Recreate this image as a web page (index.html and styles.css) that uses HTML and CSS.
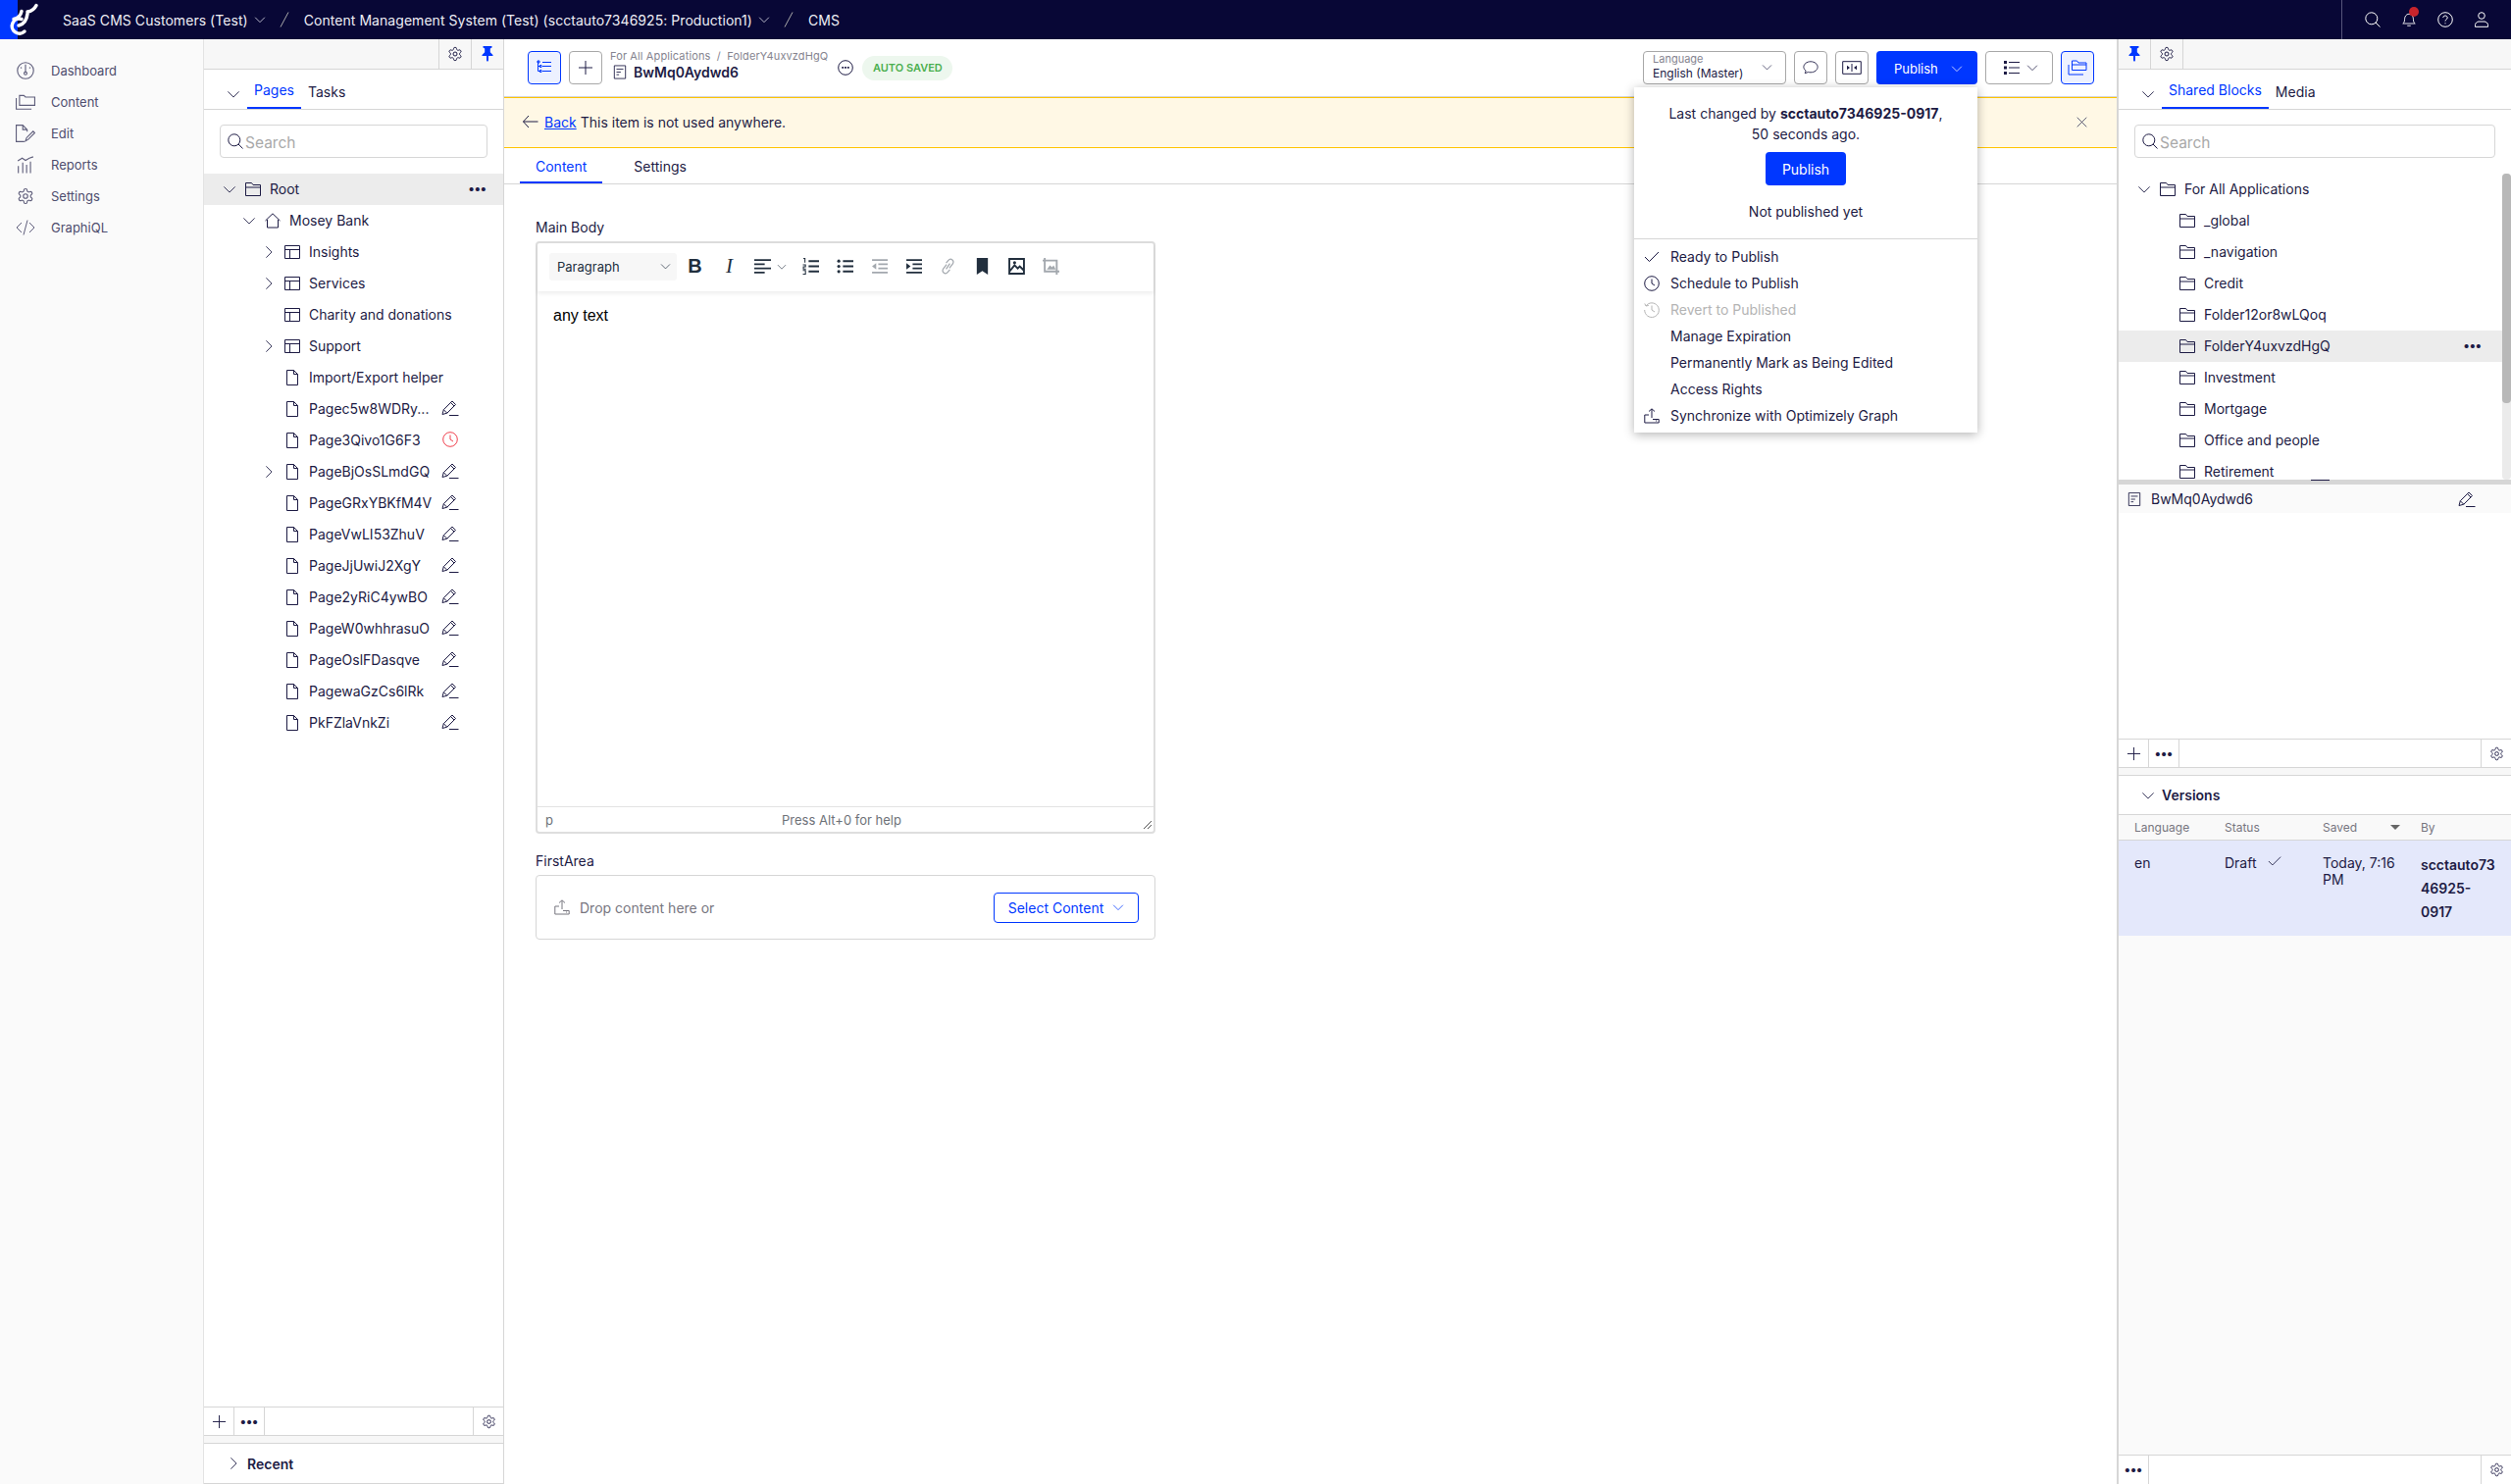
FILE: index.html
```html
<!DOCTYPE html>
<html lang="en">
<head>
  <meta charset="UTF-8" />
  <title>CMS</title>
  <link rel="stylesheet" href="styles.css">
</head>
<body>
  <svg class="sprite" width="0" height="0">
    <symbol id="i-chev-d" viewBox="0 0 16 16"><path d="M1.5 5l6.5 6.5L14.500 5"/></symbol>
    <symbol id="i-chev-r" viewBox="0 0 16 16"><path d="M5 1.500L11.500 8 5 14.500"/></symbol>
    <symbol id="i-gear" viewBox="0 0 24 24"><path class="w15" d="M12.220 2h-.44a2 2 0 0 0-2 2v.18a2 2 0 0 1-1 1.730l-.43.25a2 2 0 0 1-2 0l-.15-.08a2 2 0 0 0-2.730.73l-.22.38a2 2 0 0 0 .73 2.730l.15.1a2 2 0 0 1 1 1.720v.51a2 2 0 0 1-1 1.740l-.15.09a2 2 0 0 0-.73 2.730l.22.38a2 2 0 0 0 2.730.73l.15-.08a2 2 0 0 1 2 0l.43.25a2 2 0 0 1 1 1.730V20a2 2 0 0 0 2 2h.44a2 2 0 0 0 2-2v-.18a2 2 0 0 1 1-1.730l.43-.25a2 2 0 0 1 2 0l.15.08a2 2 0 0 0 2.730-.73l.22-.39a2 2 0 0 0-.73-2.730l-.15-.08a2 2 0 0 1-1-1.740v-.5a2 2 0 0 1 1-1.740l.15-.09a2 2 0 0 0 .73-2.730l-.22-.38a2 2 0 0 0-2.730-.73l-.15.08a2 2 0 0 1-2 0l-.43-.25a2 2 0 0 1-1-1.730V4a2 2 0 0 0-2-2z"/><circle class="w15" cx="12" cy="12" r="3"/></symbol>
    <symbol id="i-pin" viewBox="0 0 16 16"><path class="fill" d="M3.500 0h9v1.500l-1.700 1v3.700l2.700 2.700V10H9v4.500L8 16l-1-1.500V10H2.500V8.900l2.700-2.700V2.500l-1.700-1z"/></symbol>
    <symbol id="i-folder" viewBox="0 0 16 16"><path d="M.5 14.500V1.500h6l1.500 2h7.500v11zM.5 6h15"/></symbol>
    <symbol id="i-folder-open" viewBox="0 0 20 16"><path d="M4.500 10.500V1h5l1.500 2h8v7.500zM4.500 5h14.500M1 5v10h15"/></symbol>
    <symbol id="i-home" viewBox="0 0 16 16"><path d="M.5 8L8 .8 15.500 8M2.500 7v8h11V7"/></symbol>
    <symbol id="i-layout" viewBox="0 0 16 16"><path d="M.5 1.500h15v13H.5zM.5 5.500h15M5.500 5.500v9"/></symbol>
    <symbol id="i-page" viewBox="0 0 16 16"><path d="M2.500.5h7l4 4v11h-11zM9.500.5v4h4"/></symbol>
    <symbol id="i-pencil" viewBox="0 0 18 16"><path d="M1 14.500l1.300-4.800L11 1l3.500 3.500-8.700 8.700zM9.500 2.500L13 6M2.300 9.700l3.500 3.500M8 15.500h9.500"/></symbol>
    <symbol id="i-clock" viewBox="0 0 16 16"><circle cx="8" cy="8" r="7.300"/><path d="M8 3.500V8l3 2"/></symbol>
    <symbol id="i-history" viewBox="0 0 16 16"><path d="M2 4a7.300 7.300 0 1 1-1.300 4M.8 1.500L2 4l2.800-.6M8 3.500V8l3 2"/></symbol>
    <symbol id="i-plus" viewBox="0 0 16 16"><path d="M8 1v14M1 8h14"/></symbol>
    <symbol id="i-search" viewBox="0 0 16 16"><circle cx="6.800" cy="6.800" r="6"/><path d="M11 11l4.500 4.500"/></symbol>
    <symbol id="i-x" viewBox="0 0 16 16"><path d="M1 1l14 14M15 1L1 15"/></symbol>
    <symbol id="i-check" viewBox="0 0 16 16"><path d="M1 8l4.500 4.500L15 3"/></symbol>
    <symbol id="i-upload" viewBox="0 0 16 16"><path d="M8 10V1M5 3.500L8 .8l3 2.700M5 7H.8v8h14.400V11.500H9M12 13h1"/></symbol>
    <symbol id="i-dash" viewBox="0 0 16 16"><circle cx="8" cy="8" r="7.300"/><circle cx="8" cy="10.500" r="1.300"/><path d="M8 2.500v6.500M3.500 5l1 .8M12.500 5l-1 .8"/></symbol>
    <symbol id="i-content" viewBox="0 0 18 14"><path d="M3.500 10V1h4l1.500 1.500h8.500V10zM.5 3.500v10h14"/></symbol>
    <symbol id="i-edit" viewBox="0 0 18 16"><path d="M8 15.500H.5V.5h6l4 4v2M6.500.5v4h4M9 15l1-3 6-6 1.500 1.500-6 6z"/></symbol>
    <symbol id="i-reports" viewBox="0 0 16 16"><path d="M1 4.500L5 2l3 2 3.500-2L15 .8M1.500 15.500V9M5.500 15.500V6M9 15.500V8M12.500 15.500V5"/></symbol>
    <symbol id="i-code" viewBox="0 0 20 16"><path d="M6 3L1 8l5 5M14 3l5 5-5 5M12 .5L8 15.500"/></symbol>
    <symbol id="i-doc" viewBox="0 0 16 16"><path d="M1.500.5h13v15h-13zM4 4.500h8M4 8h5M4 11h3"/></symbol>
    <symbol id="i-tree" viewBox="0 0 16 16"><path d="M1.500 1v10.500h2M1.500 6.500h2M6 2.500h9M6 6.500h9M6 11.500h9"/><path d="M1 1h2v2H1zM3.500 5.500h1.500v2H3.500zM3.500 10.500h1.500v2H3.500z"/></symbol>
    <symbol id="i-list" viewBox="0 0 16 16"><path d="M5 2.500h11M5 8h11M5 13.500h11"/><path class="fill" d="M0 1h3v3H0zM0 6.500h3v3H0zM0 12h3v3H0z"/></symbol>
    <symbol id="i-comment" viewBox="0 0 18 16"><path d="M2.500 14.500l1-3C1.800 10.300 1 8.800 1 7.200 1 3.800 4.500 1 9 1s8 2.800 8 6.200-3.500 6.200-8 6.200c-1 0-2-.1-2.800-.4z"/></symbol>
    <symbol id="i-compare" viewBox="0 0 20 14"><path d="M.7.7h18.600v12.600H.7zM10 3v8"/><path class="fill" d="M8 7L5 4.800v4.400zM12 7l3-2.200v4.400z"/></symbol>
    <symbol id="i-more-c" viewBox="0 0 16 16"><circle cx="8" cy="8" r="7.300"/><path class="fill" d="M4.300 7h1.800v1.800H4.300zM7.100 7h1.800v1.800H7.100zM9.900 7h1.800v1.800H9.900z"/></symbol>
    <symbol id="i-bell" viewBox="0 0 16 18"><path d="M1 13.500c1.500-1 2-2.500 2-5S4.500 2.500 8 2.500s5 3.500 5 6 .5 4 2 5zM6 16h4"/></symbol>
    <symbol id="i-help" viewBox="0 0 16 16"><circle cx="8" cy="8" r="7.300"/><path d="M5.800 6c0-1.300 1-2 2.200-2s2.200.8 2.200 2c0 1.800-2.200 1.800-2.200 3.500M8 11.300v1"/></symbol>
    <symbol id="i-user" viewBox="0 0 16 16"><circle cx="8" cy="4" r="3.300"/><path d="M1.500 15.300v-1.800c0-2 2-3.500 3.500-3.500h6c1.500 0 3.500 1.500 3.500 3.500v1.800z"/></symbol>
    <symbol id="i-back" viewBox="0 0 16 14"><path d="M6.500 1L1 7l5.500 6M1 7h15"/></symbol>
    <symbol id="i-align" viewBox="0 0 16 14"><path class="thick" d="M0 1h16M0 5h10M0 9h16M0 13h10"/></symbol>
    <symbol id="i-ol" viewBox="0 0 16 16"><path class="thick" d="M6 3h10M6 8h10M6 13h10"/><path d="M1 .5h1.500v4M.5 6.500h2.500v2H1v2h2.500M.5 12h2.500v3.500H.5"/></symbol>
    <symbol id="i-ul" viewBox="0 0 16 16"><path class="thick" d="M6 3h10M6 8h10M6 13h10"/><circle class="fill" cx="2" cy="3" r="1.500"/><circle class="fill" cx="2" cy="8" r="1.500"/><circle class="fill" cx="2" cy="13" r="1.500"/></symbol>
    <symbol id="i-outdent" viewBox="0 0 16 16"><path class="thick" d="M1 2h15M7 6h9M7 10h9M1 14h15"/><path class="fill" d="M5 5v6L1 8z"/></symbol>
    <symbol id="i-indent" viewBox="0 0 16 16"><path class="thick" d="M1 2h15M7 6h9M7 10h9M1 14h15"/><path class="fill" d="M1 5v6l4-3z"/></symbol>
    <symbol id="i-link" viewBox="0 0 16 18"><path class="w13" d="M6.500 7L3 11.500c-1.200 1.500-1 3.500.3 4.500s3.300.7 4.500-.8L10 12.500M9.500 11L13 6.500c1.200-1.500 1-3.500-.3-4.500s-3.300-.7-4.500.8L6 5.500M6 12l4-6"/></symbol>
    <symbol id="i-bookmark" viewBox="0 0 12 18"><path class="fill" d="M0 0h12v18l-6-4-6 4z"/></symbol>
    <symbol id="i-image" viewBox="0 0 16 16"><path class="thick" d="M1 1h14v14H1zM1 13l5-6 3 3 2-2 4 4"/><circle class="fill" cx="6" cy="4.500" r="1.500"/></symbol>
    <symbol id="i-crop" viewBox="0 0 16 16"><path class="thick" d="M2 0v13h14M0 2.500h13.500V16"/><path class="fill" d="M4 11l3-4 2 2 1.500-2 2 4z"/></symbol>
  </svg>

  <header class="topbar">
    <div class="logo">
      <svg viewBox="0 0 40 40" width="40" height="40"><path d="M22 19.500A7.500 7.500 0 1 0 25 32"/><path d="M14 19.500c4-1 7-3 8-8"/><path d="M19 26c5-1 8-4 9-12"/><path d="M28 12c4-.5 7-2.500 9-6.500"/></svg>
    </div>
    <nav class="crumbs">
      <span>SaaS CMS Customers (Test)</span><svg class="ico ico-12"><use href="#i-chev-d"/></svg>
      <svg class="slash" width="10" height="16"><path d="M1 15.500L9 .5"/></svg>
      <span>Content Management System (Test) (scctauto7346925: Production1)</span><svg class="ico ico-12"><use href="#i-chev-d"/></svg>
      <svg class="slash" width="10" height="16"><path d="M1 15.500L9 .5"/></svg>
      <span>CMS</span>
    </nav>
    <div class="top-actions">
      <svg class="ico"><use href="#i-search"/></svg>
      <span class="bell"><svg class="ico"><use href="#i-bell"/></svg><i class="dot"></i></span>
      <svg class="ico"><use href="#i-help"/></svg>
      <svg class="ico"><use href="#i-user"/></svg>
    </div>
  </header>

  <div class="app">
    <aside class="sidenav">
      <a class="nav-item"><svg class="ico"><use href="#i-dash"/></svg>Dashboard</a>
      <a class="nav-item"><svg class="ico"><use href="#i-content"/></svg>Content</a>
      <a class="nav-item"><svg class="ico"><use href="#i-edit"/></svg>Edit</a>
      <a class="nav-item"><svg class="ico"><use href="#i-reports"/></svg>Reports</a>
      <a class="nav-item"><svg class="ico"><use href="#i-gear"/></svg>Settings</a>
      <a class="nav-item"><svg class="ico"><use href="#i-code"/></svg>GraphiQL</a>
    </aside>

    <section class="panel panel-left">
      <div class="panel-top right">
        <button class="tool bl"><svg class="ico"><use href="#i-gear"/></svg></button>
        <button class="tool bl pin"><svg class="ico"><use href="#i-pin"/></svg></button>
      </div>
      <div class="tabs">
        <svg class="ico tabs-chev"><use href="#i-chev-d"/></svg>
        <span class="tab active">Pages</span>
        <span class="tab">Tasks</span>
      </div>
      <label class="search"><svg class="ico"><use href="#i-search"/></svg><span>Search</span></label>
      <ul class="tree grow">
        <li class="row selected"><svg class="ico chev"><use href="#i-chev-d"/></svg><svg class="ico"><use href="#i-folder"/></svg><span class="name">Root</span><b class="dots">•••</b></li>
        <li class="row d1"><svg class="ico chev"><use href="#i-chev-d"/></svg><svg class="ico"><use href="#i-home"/></svg><span class="name">Mosey Bank</span></li>
        <li class="row d2"><svg class="ico chev"><use href="#i-chev-r"/></svg><svg class="ico"><use href="#i-layout"/></svg><span class="name">Insights</span></li>
        <li class="row d2"><svg class="ico chev"><use href="#i-chev-r"/></svg><svg class="ico"><use href="#i-layout"/></svg><span class="name">Services</span></li>
        <li class="row d2"><span class="chev"></span><svg class="ico"><use href="#i-layout"/></svg><span class="name">Charity and donations</span></li>
        <li class="row d2"><svg class="ico chev"><use href="#i-chev-r"/></svg><svg class="ico"><use href="#i-layout"/></svg><span class="name">Support</span></li>
        <li class="row d2"><span class="chev"></span><svg class="ico"><use href="#i-page"/></svg><span class="name">Import/Export helper</span></li>
        <li class="row d2"><span class="chev"></span><svg class="ico"><use href="#i-page"/></svg><span class="name clip">Pagec5w8WDRy...</span><svg class="ico state"><use href="#i-pencil"/></svg></li>
        <li class="row d2"><span class="chev"></span><svg class="ico"><use href="#i-page"/></svg><span class="name clip">Page3Qivo1G6F3</span><svg class="ico state red"><use href="#i-clock"/></svg></li>
        <li class="row d2"><svg class="ico chev"><use href="#i-chev-r"/></svg><svg class="ico"><use href="#i-page"/></svg><span class="name clip">PageBjOsSLmdGQ</span><svg class="ico state"><use href="#i-pencil"/></svg></li>
        <li class="row d2"><span class="chev"></span><svg class="ico"><use href="#i-page"/></svg><span class="name clip">PageGRxYBKfM4V</span><svg class="ico state"><use href="#i-pencil"/></svg></li>
        <li class="row d2"><span class="chev"></span><svg class="ico"><use href="#i-page"/></svg><span class="name clip">PageVwLI53ZhuV</span><svg class="ico state"><use href="#i-pencil"/></svg></li>
        <li class="row d2"><span class="chev"></span><svg class="ico"><use href="#i-page"/></svg><span class="name clip">PageJjUwiJ2XgY</span><svg class="ico state"><use href="#i-pencil"/></svg></li>
        <li class="row d2"><span class="chev"></span><svg class="ico"><use href="#i-page"/></svg><span class="name clip">Page2yRiC4ywBO</span><svg class="ico state"><use href="#i-pencil"/></svg></li>
        <li class="row d2"><span class="chev"></span><svg class="ico"><use href="#i-page"/></svg><span class="name clip">PageW0whhrasuO</span><svg class="ico state"><use href="#i-pencil"/></svg></li>
        <li class="row d2"><span class="chev"></span><svg class="ico"><use href="#i-page"/></svg><span class="name clip">PageOslFDasqve</span><svg class="ico state"><use href="#i-pencil"/></svg></li>
        <li class="row d2"><span class="chev"></span><svg class="ico"><use href="#i-page"/></svg><span class="name clip">PagewaGzCs6lRk</span><svg class="ico state"><use href="#i-pencil"/></svg></li>
        <li class="row d2"><span class="chev"></span><svg class="ico"><use href="#i-page"/></svg><span class="name clip">PkFZlaVnkZi</span><svg class="ico state"><use href="#i-pencil"/></svg></li>
      </ul>
      <div class="panel-foot">
        <button class="tool br"><svg class="ico"><use href="#i-plus"/></svg></button>
        <button class="tool br"><b class="dots">•••</b></button>
        <span class="grow"></span>
        <button class="tool bl"><svg class="ico"><use href="#i-gear"/></svg></button>
      </div>
      <div class="panel-gap"></div>
      <div class="section-head recent"><svg class="ico"><use href="#i-chev-r"/></svg><b>Recent</b></div>
    </section>

    <main class="main">
      <div class="edit-head">
        <button class="icon-btn on"><svg class="ico"><use href="#i-tree"/></svg></button>
        <button class="icon-btn plus"><svg class="ico"><use href="#i-plus"/></svg></button>
        <div class="title-block">
          <div class="path">For All Applications &nbsp;/&nbsp; FolderY4uxvzdHgQ</div>
          <div class="title"><svg class="ico"><use href="#i-doc"/></svg>BwMq0Aydwd6</div>
        </div>
        <svg class="ico more-c"><use href="#i-more-c"/></svg>
        <span class="saved">AUTO SAVED</span>
        <span class="grow"></span>
        <div class="lang">
          <div><small>Language</small><span>English (Master)</span></div>
          <svg class="ico"><use href="#i-chev-d"/></svg>
        </div>
        <button class="icon-btn wide"><svg class="ico"><use href="#i-comment"/></svg></button>
        <button class="icon-btn wide"><svg class="ico compare"><use href="#i-compare"/></svg></button>
        <button class="publish-btn"><span>Publish</span><svg class="ico"><use href="#i-chev-d"/></svg></button>
        <button class="icon-btn view"><svg class="ico"><use href="#i-list"/></svg><svg class="ico small"><use href="#i-chev-d"/></svg></button>
        <button class="icon-btn wide on"><svg class="ico folder"><use href="#i-folder-open"/></svg></button>
      </div>

      <div class="banner">
        <svg class="ico"><use href="#i-back"/></svg>
        <a href="#">Back</a>
        <span class="grow">This item is not used anywhere.</span>
        <svg class="ico close"><use href="#i-x"/></svg>
      </div>

      <div class="tabs content-tabs">
        <span class="tab active">Content</span>
        <span class="tab">Settings</span>
      </div>

      <div class="form">
        <label class="field-label">Main Body</label>
        <div class="editor">
          <div class="ed-toolbar">
            <div class="format"><span>Paragraph</span><svg class="ico"><use href="#i-chev-d"/></svg></div>
            <span class="tb bold">B</span>
            <span class="tb italic">I</span>
            <span class="tb align"><svg class="ico"><use href="#i-align"/></svg><svg class="ico mini"><use href="#i-chev-d"/></svg></span>
            <span class="tb"><svg class="ico"><use href="#i-ol"/></svg></span>
            <span class="tb"><svg class="ico"><use href="#i-ul"/></svg></span>
            <span class="tb off"><svg class="ico"><use href="#i-outdent"/></svg></span>
            <span class="tb"><svg class="ico"><use href="#i-indent"/></svg></span>
            <span class="tb off"><svg class="ico"><use href="#i-link"/></svg></span>
            <span class="tb"><svg class="ico"><use href="#i-bookmark"/></svg></span>
            <span class="tb"><svg class="ico"><use href="#i-image"/></svg></span>
            <span class="tb off"><svg class="ico"><use href="#i-crop"/></svg></span>
          </div>
          <div class="ed-body">any text</div>
          <div class="ed-status">
            <span>p</span>
            <span class="help">Press Alt+0 for help</span>
            <svg class="grip" width="8" height="8"><path d="M0 8l8-8M4 8l4-4"/></svg>
          </div>
        </div>
        <label class="field-label second">FirstArea</label>
        <div class="droparea">
          <svg class="ico"><use href="#i-upload"/></svg>
          <span class="grow">Drop content here or</span>
          <button class="select-btn">Select Content<svg class="ico"><use href="#i-chev-d"/></svg></button>
        </div>
      </div>

      <div class="publish-menu">
        <div class="pm-top">
          <p>Last changed by <b>scctauto7346925-0917</b>,<br>50 seconds ago.</p>
          <button class="pm-btn">Publish</button>
          <p class="pm-note">Not published yet</p>
        </div>
        <ul class="pm-list">
          <li><svg class="ico"><use href="#i-check"/></svg>Ready to Publish</li>
          <li><svg class="ico"><use href="#i-clock"/></svg>Schedule to Publish</li>
          <li class="off"><svg class="ico"><use href="#i-history"/></svg>Revert to Published</li>
          <li><span class="ico"></span>Manage Expiration</li>
          <li><span class="ico"></span>Permanently Mark as Being Edited</li>
          <li><span class="ico"></span>Access Rights</li>
          <li><svg class="ico"><use href="#i-upload"/></svg>Synchronize with Optimizely Graph</li>
        </ul>
      </div>
    </main>

    <section class="panel panel-right">
      <div class="panel-top">
        <button class="tool br pin"><svg class="ico"><use href="#i-pin"/></svg></button>
        <button class="tool br"><svg class="ico"><use href="#i-gear"/></svg></button>
      </div>
      <div class="tabs">
        <svg class="ico tabs-chev"><use href="#i-chev-d"/></svg>
        <span class="tab active">Shared Blocks</span>
        <span class="tab">Media</span>
      </div>
      <label class="search"><svg class="ico"><use href="#i-search"/></svg><span>Search</span></label>
      <div class="tree-wrap">
        <ul class="tree">
          <li class="row"><svg class="ico chev"><use href="#i-chev-d"/></svg><svg class="ico"><use href="#i-folder"/></svg><span class="name">For All Applications</span></li>
          <li class="row b1"><svg class="ico"><use href="#i-folder"/></svg><span class="name">_global</span></li>
          <li class="row b1"><svg class="ico"><use href="#i-folder"/></svg><span class="name">_navigation</span></li>
          <li class="row b1"><svg class="ico"><use href="#i-folder"/></svg><span class="name">Credit</span></li>
          <li class="row b1"><svg class="ico"><use href="#i-folder"/></svg><span class="name">Folder12or8wLQoq</span></li>
          <li class="row b1 selected"><svg class="ico"><use href="#i-folder"/></svg><span class="name">FolderY4uxvzdHgQ</span><b class="dots">•••</b></li>
          <li class="row b1"><svg class="ico"><use href="#i-folder"/></svg><span class="name">Investment</span></li>
          <li class="row b1"><svg class="ico"><use href="#i-folder"/></svg><span class="name">Mortgage</span></li>
          <li class="row b1"><svg class="ico"><use href="#i-folder"/></svg><span class="name">Office and people</span></li>
          <li class="row b1"><svg class="ico"><use href="#i-folder"/></svg><span class="name">Retirement</span></li>
        </ul>
        <div class="scroll"><i></i></div>
      </div>
      <div class="splitter"><i></i></div>
      <div class="block-item">
        <svg class="ico"><use href="#i-doc"/></svg><span class="grow">BwMq0Aydwd6</span><svg class="ico state"><use href="#i-pencil"/></svg>
      </div>
      <div class="grow"></div>
      <div class="panel-foot">
        <button class="tool br"><svg class="ico"><use href="#i-plus"/></svg></button>
        <button class="tool br"><b class="dots">•••</b></button>
        <span class="grow"></span>
        <button class="tool bl"><svg class="ico"><use href="#i-gear"/></svg></button>
      </div>
      <div class="panel-gap"></div>
      <div class="section-head versions"><svg class="ico"><use href="#i-chev-d"/></svg><b>Versions</b></div>
      <div class="ver-grid ver-head">
        <span>Language</span><span>Status</span><span class="saved-col">Saved<i class="sort"></i></span><span>By</span>
      </div>
      <div class="ver-grid ver-row">
        <span>en</span>
        <span>Draft<svg class="ico"><use href="#i-check"/></svg></span>
        <span>Today, 7:16 PM</span>
        <b>scctauto7346925-0917</b>
      </div>
      <div class="ver-rest"></div>
      <div class="panel-foot last">
        <button class="tool br"><b class="dots">•••</b></button>
        <span class="grow"></span>
        <button class="tool bl"><svg class="ico"><use href="#i-gear"/></svg></button>
      </div>
    </section>
  </div>
</body>
</html>
```

FILE: styles.css
```css
* {
  box-sizing: border-box;
}
html, body {
  height: 100%;
}
body {
  margin: 0;
  height: 1513px;
  overflow: hidden;
  display: flex;
  flex-direction: column;
  font-family: Inter, 'Noto Sans', sans-serif;
  font-size: 14px;
  color: #1d1b44;
  background: #fff;
}
ul {
  list-style: none;
  margin: 0;
  padding: 0;
}
button {
  font: inherit;
  background: none;
  border: 0;
  padding: 0;
  color: inherit;
}
.sprite {
  position: absolute;
}
.grow {
  flex: 1;
}

/* icons are all line drawings unless a path says otherwise */
.ico {
  width: 16px;
  height: 16px;
  flex: none;
  overflow: visible;
}
svg path, svg circle {
  fill: none;
  stroke: currentColor;
  stroke-width: 1;
}
svg .fill {
  fill: currentColor;
  stroke: none;
}
svg .thick {
  stroke-width: 1.8;
}
svg .w15 {
  stroke-width: 1.5;
}
svg .w13 {
  stroke-width: 1.3;
}
.ico-12 {
  width: 12px;
  height: 12px;
}

/* top bar */
.topbar {
  height: 40px;
  flex: none;
  display: flex;
  align-items: center;
  background: #080736;
  color: #fff;
}
.logo {
  width: 40px;
  height: 40px;
  background: linear-gradient(90deg, #0037ff 18px, transparent 18px);
}
.logo path {
  stroke-width: 3.500;
  stroke-linecap: round;
}
.crumbs {
  display: flex;
  align-items: center;
  gap: 6px;
  margin-left: 24px;
  font-size: 14px;
  letter-spacing: 0.05px;
  color: #eeeef5;
}
.slash {
  margin: 0 9px 0 8px;
}
.slash path {
  stroke: #aaa;
}
.top-actions {
  margin-left: auto;
  width: 173px;
  height: 40px;
  display: flex;
  align-items: center;
  gap: 21px;
  padding-left: 23px;
  border-left: 1px solid #56557a;
}
.bell {
  position: relative;
  display: flex;
}
.dot {
  position: absolute;
  left: 8px;
  top: -5px;
  width: 10px;
  height: 10px;
  border-radius: 50%;
  background: #c8242c;
}

.app {
  flex: 1;
  display: flex;
  min-height: 0;
}

/* left navigation */
.sidenav {
  width: 208px;
  flex: none;
  padding-top: 16px;
  background: #fafafa;
  border-right: 1px solid #e3e3e3;
}
.nav-item {
  height: 32px;
  display: flex;
  align-items: center;
  gap: 16px;
  padding-left: 16px;
  font-size: 13px;
  color: #4e4d6e;
}
.nav-item .ico {
  width: 20px;
  height: 18px;
  color: #5f5e7b;
}

/* side panels */
.panel {
  flex: none;
  display: flex;
  flex-direction: column;
  background: #fff;
}
.panel-left {
  width: 306px;
  border-right: 1px solid #d6d6d6;
}
.panel-right {
  width: 401px;
  border-left: 1px solid #d6d6d6;
}
.panel-top {
  height: 31px;
  flex: none;
  display: flex;
  background: #f7f7f7;
  border-bottom: 1px solid #d6d6d6;
}
.panel-top.right {
  justify-content: flex-end;
}
.tool {
  width: 33px;
  height: 100%;
  flex: none;
  display: flex;
  align-items: center;
  justify-content: center;
  color: #1d1b44;
}
.tool.bl {
  border-left: 1px solid #d6d6d6;
}
.tool.br {
  border-right: 1px solid #d6d6d6;
}
.pin {
  color: #0037ff;
}
.tabs {
  height: 41px;
  flex: none;
  display: flex;
  align-items: flex-end;
  padding-left: 23px;
  border-bottom: 1px solid #d6d6d6;
}
.tabs-chev {
  width: 14px;
  height: 14px;
  margin-bottom: 8px;
  margin-right: 7px;
}
.tab {
  height: 40px;
  padding: 14px 7px 0;
  font-size: 14px;
}
.tab.active {
  padding-top: 12px;
  color: #0037ff;
  border-bottom: 2px solid #0037ff;
}
.search {
  height: 34px;
  flex: none;
  margin: 15px 16px 16px;
  padding-left: 7px;
  display: flex;
  align-items: center;
  gap: 2px;
  border: 1px solid #d6d6d6;
  border-radius: 4px;
  font-size: 15.500px;
  color: #a9a9a9;
}
.search span {
  padding-top: 2px;
}
.search .ico {
  color: #1d1b44;
}
.tree {
  min-height: 0;
  overflow: hidden;
}
.row {
  height: 32px;
  display: flex;
  align-items: center;
  gap: 9px;
  padding-left: 19px;
  position: relative;
}
.row .name {
  margin-top: -2px;
}
.row .chev {
  width: 14px;
  height: 14px;
  flex: none;
}
.row.d1 {
  padding-left: 39px;
}
.row.d2 {
  padding-left: 59px;
}
.row.selected {
  background: #ececec;
}
.dots {
  font-size: 13px;
  line-height: 1;
}
.row .dots {
  position: absolute;
  right: 17px;
  top: 9px;
}
.row .state {
  position: absolute;
  left: 242px;
  width: 18px;
  top: 7px;
}
.red {
  color: #f0414e;
}
.name.clip {
  white-space: nowrap;
}
.panel-foot {
  height: 30px;
  flex: none;
  display: flex;
  border-top: 1px solid #d6d6d6;
  border-bottom: 1px solid #d6d6d6;
}
.panel-foot .tool {
  width: 31px;
}
.panel-foot .tool .ico {
  width: 15px;
  height: 15px;
}
.panel-gap {
  height: 8px;
  flex: none;
  background: #f7f7f7;
  border-bottom: 1px solid #d6d6d6;
}
.section-head {
  height: 40px;
  flex: none;
  display: flex;
  align-items: center;
  gap: 7px;
  padding-left: 23px;
  font-size: 14px;
}
.section-head .ico {
  width: 14px;
  height: 14px;
}
.section-head b {
  font-weight: 600;
}
.recent {
  height: 41px;
  border-bottom: 1px solid #d6d6d6;
}

/* main column */
.main {
  flex: 1;
  min-width: 0;
  position: relative;
  display: flex;
  flex-direction: column;
  border-right: 1px solid #d6d6d6;
}
.edit-head {
  height: 59px;
  flex: none;
  display: flex;
  align-items: center;
  padding-left: 24px;
  padding-right: 23px;
  border-bottom: 1px solid #d6d6d6;
}
.icon-btn {
  height: 34px;
  width: 34px;
  flex: none;
  display: flex;
  align-items: center;
  justify-content: center;
  border: 1px solid #a8a8a8;
  border-radius: 4px;
}
.icon-btn.on {
  color: #0037ff;
  background: #edf1ff;
  border-color: #0037ff;
}
.icon-btn.plus {
  margin-left: 8px;
}
.icon-btn.wide {
  margin-left: 8px;
}
.icon-btn .folder {
  width: 20px;
}
.icon-btn .compare {
  width: 20px;
  height: 14px;
}
.icon-btn.view {
  width: 69px;
  margin-left: 8px;
  gap: 7px;
  padding-left: 3px;
}
.icon-btn .small {
  width: 12px;
  height: 12px;
}
.title-block {
  margin-left: 8px;
}
.path {
  font-size: 11px;
  letter-spacing: 0.12px;
  color: #85848f;
  line-height: 12px;
  margin-top: -5px;
}
.title {
  display: flex;
  align-items: center;
  gap: 7px;
  margin-top: 2px;
  font-size: 14px;
  font-weight: 600;
  line-height: 18px;
  margin-left: 3px;
}
.title .ico {
  width: 14px;
  height: 15px;
}
.more-c {
  margin-left: 10px;
}
.saved {
  margin-left: 9px;
  width: 92px;
  height: 25px;
  display: flex;
  align-items: center;
  justify-content: center;
  border-radius: 13px;
  background: #edf7ee;
  color: #4caf50;
  font-size: 11px;
  font-weight: 600;
}
.lang {
  width: 146px;
  height: 34px;
  flex: none;
  display: flex;
  align-items: center;
  justify-content: space-between;
  padding: 0 13px 0 9px;
  border: 1px solid #a8a8a8;
  border-radius: 4px;
  font-size: 12px;
}
.lang small {
  display: block;
  font-size: 11px;
  line-height: 11px;
  color: #85848f;
}
.lang span {
  display: block;
  line-height: 17px;
}
.lang .ico {
  width: 11px;
  height: 11px;
  margin-top: -2px;
}
.publish-btn {
  width: 103px;
  height: 34px;
  flex: none;
  margin-left: 8px;
  display: flex;
  align-items: center;
  justify-content: space-between;
  padding: 2px 15px 0 18px;
  border-radius: 4px;
  background: #0037ff;
  color: #fff;
  font-size: 13px;
}
.publish-btn .ico {
  width: 12px;
  height: 12px;
}
.banner {
  height: 52px;
  flex: none;
  display: flex;
  align-items: center;
  padding: 0 30px 2px 18px;
  background: #fff8e5;
  border-top: 1px solid #ffc400;
  border-bottom: 1px solid #ffc400;
  font-size: 14px;
}
.banner .ico {
  width: 17px;
  height: 14px;
  margin-right: 6px;
}
.banner a {
  color: #0037ff;
  margin-right: 4px;
}
.banner .close {
  width: 11px;
  height: 11px;
  margin: 0;
}
.content-tabs {
  height: 37px;
  padding-left: 16px;
}
.content-tabs .tab {
  height: 37px;
  padding: 11px 16px 0;
}
.content-tabs .tab + .tab {
  margin-left: 16px;
}
.form {
  width: 664px;
  padding: 35px 0 0 32px;
}
.field-label {
  display: block;
  line-height: 18px;
  font-size: 14px;
}
.field-label.second {
  margin-top: 19px;
}
.editor {
  margin-top: 5px;
  height: 604px;
  display: flex;
  flex-direction: column;
  border: 2px solid #dedede;
  border-radius: 4px;
}
.ed-toolbar {
  height: 49px;
  flex: none;
  display: flex;
  align-items: center;
  padding: 0 0 2px 12px;
  box-shadow: 0 2px 5px rgba(0,0,0,0.08);
}
.format {
  width: 130px;
  height: 28px;
  flex: none;
  display: flex;
  align-items: center;
  justify-content: space-between;
  padding: 0 6px 0 8px;
  margin-right: 1px;
  background: #f7f7f7;
  border-radius: 3px;
  font-size: 13px;
  color: #222f3e;
}
.format .ico {
  width: 11px;
  height: 11px;
}
.tb {
  width: 35px;
  flex: none;
  display: flex;
  align-items: center;
  justify-content: center;
  color: #222f3e;
  font-size: 18px;
}
.tb .ico {
  width: 17px;
  height: 17px;
}
.tb.off {
  color: #a3a8ae;
}
.bold {
  font-weight: 700;
  font-family: 'Liberation Sans', sans-serif;
  font-size: 20px;
}
.italic {
  font-style: italic;
  font-family: 'Liberation Serif', serif;
  font-size: 21px;
}
.tb.align {
  width: 48px;
  gap: 6px;
}
.tb .mini {
  width: 10px;
  height: 10px;
}
.ed-body {
  flex: 1;
  padding: 16px;
  font-family: 'Liberation Sans', sans-serif;
  font-size: 16px;
  color: #000;
}
.ed-status {
  height: 26px;
  flex: none;
  position: relative;
  display: flex;
  align-items: center;
  padding-left: 8px;
  border-top: 1px solid #e3e3e3;
  font-size: 13px;
  color: #6e7278;
}
.help {
  position: absolute;
  left: 0;
  right: 8px;
  text-align: center;
  color: #6e7278;
}
.grip {
  position: absolute;
  right: 2px;
  bottom: 3px;
}
.grip path {
  stroke: #555;
}
.droparea {
  margin-top: 5px;
  height: 66px;
  display: flex;
  align-items: center;
  padding: 0 16px 0 18px;
  gap: 10px;
  border: 1px solid #d6d6d6;
  border-radius: 4px;
  font-size: 14px;
  color: #77767f;
}
.select-btn {
  width: 148px;
  height: 31px;
  display: flex;
  align-items: center;
  justify-content: center;
  gap: 9px;
  border: 1px solid #0037ff;
  border-radius: 4px;
  color: #0037ff;
  font-size: 14px;
}
.select-btn .ico {
  width: 12px;
  height: 12px;
}

/* publish dropdown, sits over the header and banner */
.publish-menu {
  position: absolute;
  left: 1152px;
  top: 49px;
  width: 350px;
  height: 352px;
  background: #fff;
  box-shadow: 0 2px 10px rgba(0,0,0,0.3);
}
.pm-top {
  height: 155px;
  text-align: center;
  padding-top: 16px;
  border-bottom: 1px solid #d6d6d6;
}
.pm-top p {
  margin: 0;
  line-height: 21px;
}
.pm-top b {
  font-weight: 700;
}
.pm-btn {
  width: 82px;
  height: 34px;
  margin-top: 8px;
  border-radius: 4px;
  background: #0037ff;
  color: #fff;
}
.pm-top .pm-note {
  margin-top: 16px;
}
.pm-list {
  padding-top: 4px;
}
.pm-list li {
  height: 27px;
  display: flex;
  align-items: center;
  gap: 11px;
  padding-left: 10px;
}
.pm-list .off {
  color: #b4b4b4;
}

/* right panel */
.tree-wrap {
  height: 312px;
  flex: none;
  display: flex;
  position: relative;
}
.tree-wrap .tree {
  flex: 1;
  height: 312px;
}
.tree-wrap .row.b1 {
  padding-left: 62px;
}
.tree-wrap .row .dots {
  right: 21px;
}
.scroll {
  width: 9px;
  background: #ebebeb;
  border-radius: 4px;
}
.scroll i {
  display: block;
  height: 234px;
  background: #b8b8b8;
  border-radius: 4px;
}
.splitter {
  height: 5px;
  flex: none;
  background: #d6d6d6;
  position: relative;
}
.splitter i {
  position: absolute;
  left: 196px;
  top: 0;
  width: 19px;
  height: 1px;
  background: #1d1b44;
}
.block-item {
  height: 29px;
  flex: none;
  display: flex;
  align-items: center;
  gap: 10px;
  padding: 0 36px 0 9px;
  background: #fafafa;
}
.block-item .ico {
  width: 14px;
  height: 14px;
}
.block-item .state {
  width: 18px;
  height: 16px;
}
.versions {
  height: 40px;
  border-bottom: 1px solid #d6d6d6;
}
.ver-grid {
  display: grid;
  grid-template-columns: 92px 100px 100px 1fr;
  padding-left: 16px;
}
.ver-head {
  height: 26px;
  align-items: center;
  font-size: 12px;
  color: #77767f;
  background: #f9f9f9;
  border-bottom: 1px solid #d6d6d6;
}
.saved-col {
  display: flex;
  align-items: center;
  gap: 34px;
}
.sort {
  width: 0;
  height: 0;
  border-left: 5px solid transparent;
  border-right: 5px solid transparent;
  border-top: 5px solid #666;
}
.ver-row {
  height: 97px;
  padding-top: 14px;
  background: #e4e8fb;
  line-height: 17px;
}
.ver-row span {
  padding-right: 8px;
}
.ver-row .ico {
  width: 14px;
  height: 14px;
  margin-left: 11px;
}
.ver-row b {
  font-weight: 600;
  overflow-wrap: anywhere;
  line-height: 24px;
  padding-right: 12px;
  margin-top: -1px;
}
.ver-rest {
  flex: none;
  height: 529px;
  background: #fafafa;
}
.panel-foot.last {
  border-bottom: 0;
}
```
